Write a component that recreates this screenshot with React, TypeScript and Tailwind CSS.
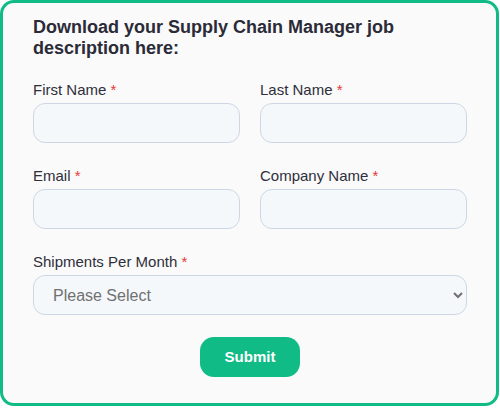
import React from 'react';

const Label: React.FC<{ text: string }> = ({ text }) => (
  <label className="block h-[20px] text-[15px] leading-[20px] text-[#2f2f3a]">
    {text} <span className="text-[#e53935]">*</span>
  </label>
);

const Field: React.FC<{ label: string; type?: string }> = ({ label, type = 'text' }) => (
  <div className="flex flex-col gap-[3px]">
    <Label text={label} />
    <input
      type={type}
      className="h-[40px] w-full rounded-[12px] border border-[#cdd7e4] bg-[#f5f8fb] px-[20px] text-[16px] outline-none"
    />
  </div>
);

export default function App() {
  return (
    <div className="font-['Liberation_Sans',Arial,sans-serif]">
      <form
        className="flex h-[406px] w-[499px] flex-col rounded-[14px] border-[3px] border-[#10bb86] bg-[#fafafa] pb-[26px] pl-[30px] pr-[29px] pt-[14px]"
        onSubmit={(e) => e.preventDefault()}
      >
        <h2 className="text-[18px] font-bold leading-[21px] text-[#2b2b38]">
          Download your Supply Chain Manager job description here:
        </h2>

        <div className="mt-[21px] grid grid-cols-2 gap-x-[20px] gap-y-[23px]">
          <Field label="First Name" />
          <Field label="Last Name" />
          <Field label="Email" type="email" />
          <Field label="Company Name" />
          <div className="col-span-2 flex flex-col gap-[3px]">
            <Label text="Shipments Per Month" />
            <select
              defaultValue=""
              className="h-[40px] w-full rounded-[12px] border border-[#cdd7e4] bg-[#f5f8fb] pl-[15px] pr-[8px] text-[16px] text-[#707070] outline-none"
            >
              <option value="">Please Select</option>
              <option value="1">1-10</option>
              <option value="2">11-50</option>
              <option value="3">51+</option>
            </select>
          </div>
        </div>

        <div className="mt-[22px] flex justify-center">
          <button
            type="submit"
            className="h-[40px] w-[100px] rounded-[14px] bg-[#10bb86] text-[15px] font-bold text-white"
          >
            Submit
          </button>
        </div>
      </form>
    </div>
  );
}
